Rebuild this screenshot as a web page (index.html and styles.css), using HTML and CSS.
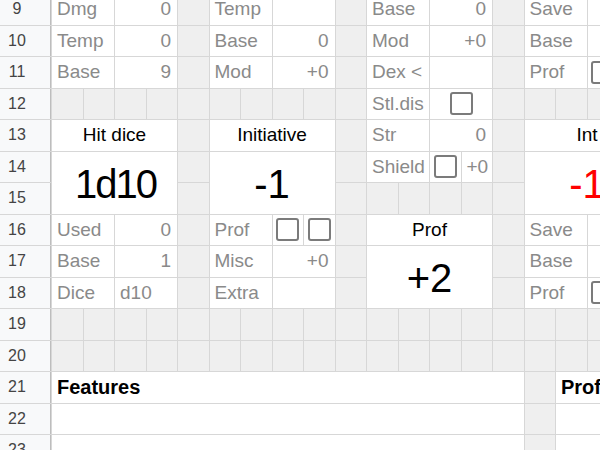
FILE: index.html
```html
<!DOCTYPE html>
<html>
<head>
<meta charset="utf-8">
<link rel="stylesheet" href="styles.css">
</head>
<body>
<div class="sheet">
  <!-- row 9 -->
  <div class="h">9</div>
  <div class="c s2">Dmg</div><div class="c s2 num">0</div><div class="g"></div>
  <div class="c s2">Temp</div><div class="c s2"></div><div class="g"></div>
  <div class="c s2">Base</div><div class="c s2 num">0</div><div class="g"></div>
  <div class="c s2">Save</div><div class="c s2"></div>
  <!-- row 10 -->
  <div class="h">10</div>
  <div class="c s2">Temp</div><div class="c s2 num">0</div><div class="g"></div>
  <div class="c s2">Base</div><div class="c s2 num">0</div><div class="g"></div>
  <div class="c s2">Mod</div><div class="c s2 num">+0</div><div class="g"></div>
  <div class="c s2">Base</div><div class="c s2"></div>
  <!-- row 11 -->
  <div class="h">11</div>
  <div class="c s2">Base</div><div class="c s2 num">9</div><div class="g"></div>
  <div class="c s2">Mod</div><div class="c s2 num">+0</div><div class="g"></div>
  <div class="c s2">Dex &lt;</div><div class="c s2"></div><div class="g"></div>
  <div class="c s2">Prof</div><div class="c cb"><span class="box"></span></div><div class="c cb"><span class="box"></span></div>
  <!-- row 12 -->
  <div class="h">12</div>
  <div class="g"></div><div class="g"></div><div class="g"></div><div class="g"></div><div class="g"></div>
  <div class="g"></div><div class="g"></div><div class="g"></div><div class="g"></div><div class="g"></div>
  <div class="c s2">Stl.dis</div><div class="c s2 cb"><span class="box"></span></div><div class="g"></div>
  <div class="g"></div><div class="g"></div><div class="g"></div><div class="g"></div>
  <!-- row 13 -->
  <div class="h">13</div>
  <div class="c s4 title">Hit dice</div><div class="g"></div>
  <div class="c s4 title">Initiative</div><div class="g"></div>
  <div class="c s2">Str</div><div class="c s2 num">0</div><div class="g"></div>
  <div class="c s4 title">Int</div>
  <!-- row 14 -->
  <div class="h">14</div>
  <div class="c s4 r2 big tight">1d10</div><div class="g"></div>
  <div class="c s4 r2 big">-1</div><div class="g"></div>
  <div class="c s2">Shield</div><div class="c cb"><span class="box"></span></div><div class="c num">+0</div><div class="g"></div>
  <div class="c s4 r2 big red">-1</div>
  <!-- row 15 -->
  <div class="h">15</div>
  <div class="g"></div>
  <div class="g"></div>
  <div class="g"></div><div class="g"></div><div class="g"></div><div class="g"></div>
  <div class="g"></div>
  <!-- row 16 -->
  <div class="h">16</div>
  <div class="c s2">Used</div><div class="c s2 num">0</div><div class="g"></div>
  <div class="c s2">Prof</div><div class="c cb"><span class="box"></span></div><div class="c cb"><span class="box"></span></div><div class="g"></div>
  <div class="c s4 title">Prof</div><div class="g"></div>
  <div class="c s2">Save</div><div class="c s2"></div>
  <!-- row 17 -->
  <div class="h">17</div>
  <div class="c s2">Base</div><div class="c s2 num">1</div><div class="g"></div>
  <div class="c s2">Misc</div><div class="c s2 num">+0</div><div class="g"></div>
  <div class="c s4 r2 big">+2</div><div class="g"></div>
  <div class="c s2">Base</div><div class="c s2"></div>
  <!-- row 18 -->
  <div class="h">18</div>
  <div class="c s2">Dice</div><div class="c s2">d10</div><div class="g"></div>
  <div class="c s2">Extra</div><div class="c s2"></div><div class="g"></div>
  <div class="g"></div>
  <div class="c s2">Prof</div><div class="c cb"><span class="box"></span></div><div class="c cb"><span class="box"></span></div>
  <!-- row 19 -->
  <div class="h">19</div>
  <div class="g"></div><div class="g"></div><div class="g"></div><div class="g"></div><div class="g"></div>
  <div class="g"></div><div class="g"></div><div class="g"></div><div class="g"></div><div class="g"></div>
  <div class="g"></div><div class="g"></div><div class="g"></div><div class="g"></div><div class="g"></div>
  <div class="g"></div><div class="g"></div><div class="g"></div><div class="g"></div>
  <!-- row 20 -->
  <div class="h">20</div>
  <div class="g"></div><div class="g"></div><div class="g"></div><div class="g"></div><div class="g"></div>
  <div class="g"></div><div class="g"></div><div class="g"></div><div class="g"></div><div class="g"></div>
  <div class="g"></div><div class="g"></div><div class="g"></div><div class="g"></div><div class="g"></div>
  <div class="g"></div><div class="g"></div><div class="g"></div><div class="g"></div>
  <!-- row 21 -->
  <div class="h">21</div>
  <div class="c s15 head">Features</div><div class="g"></div>
  <div class="c s3 head">Proficiencies</div>
  <!-- row 22 -->
  <div class="h">22</div>
  <div class="c s15"></div><div class="g"></div><div class="c s3"></div>
  <!-- row 23 -->
  <div class="h">23</div>
  <div class="c s15"></div><div class="g"></div><div class="c s3"></div>
</div>
</body>
</html>
```
FILE: styles.css
```css
html, body {
  margin: 0;
  padding: 0;
  width: 600px;
  height: 450px;
  overflow: hidden;
  background: #ffffff;
  font-family: "Liberation Sans", Arial, Helvetica, sans-serif;
}

.sheet {
  display: grid;
  grid-template-columns: 51px repeat(19, 30.5px);
  grid-auto-rows: 30.5px;
  gap: 1px;
  background: #d7d7d7;
  width: max-content;
  margin-top: -6px;
}

.h {
  background: #f8f9fa;
  color: #444444;
  font-size: 16px;
  line-height: 30.5px;
  text-align: center;
  padding-right: 17px;
  box-shadow: inset -1px 0 0 #bdbdbd;
}

.g {
  background: #efefef;
}

.c {
  background: #ffffff;
  color: #8a8a8a;
  font-size: 19px;
  line-height: 30.5px;
  padding: 0 5px;
  white-space: nowrap;
  overflow: hidden;
  min-width: 0;
}

.s2 { grid-column: span 2; }
.s3 { grid-column: span 3; }
.s4 { grid-column: span 4; }
.s15 { grid-column: span 15; }
.r2 { grid-row: span 2; }

.num {
  text-align: right;
  padding-right: 6px;
}

.title {
  color: #000000;
  text-align: center;
}

.big {
  color: #000000;
  font-size: 40px;
  display: flex;
  align-items: center;
  justify-content: center;
  line-height: 1;
  padding-top: 2px;
}

.tight {
  letter-spacing: -2px;
  padding-right: 3px;
}

.red {
  color: #ff0000;
}

.head {
  color: #000000;
  font-weight: bold;
  font-size: 20px;
}

.cb {
  display: flex;
  align-items: center;
  justify-content: center;
  padding: 0;
}

.box {
  display: block;
  width: 23px;
  height: 23px;
  box-sizing: border-box;
  border: 2.5px solid #7b7b7b;
  border-radius: 3px;
}
```
